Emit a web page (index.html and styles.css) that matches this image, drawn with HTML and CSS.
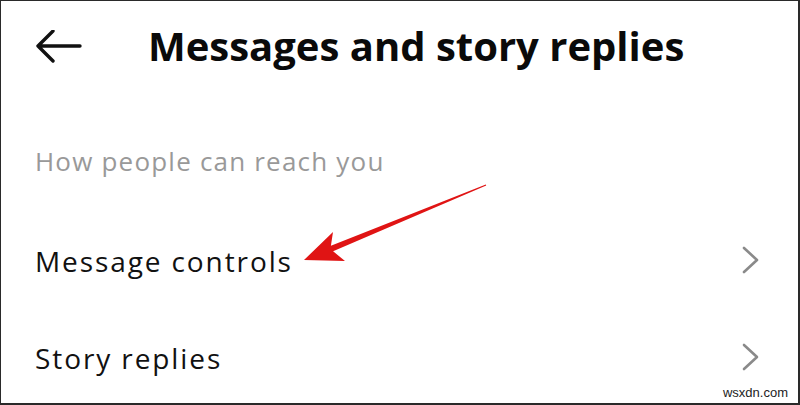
FILE: index.html
```html
<!DOCTYPE html>
<html lang="en">
<head>
  <meta charset="UTF-8" />
  <meta name="viewport" content="width=device-width, initial-scale=1.0" />
  <title>Messages and story replies</title>
  <link rel="stylesheet" href="styles.css">
</head>
<body>
  <div class="screen">
    <!-- Top bar with back button -->
    <header class="top-bar">
      <svg class="back-icon" width="46" height="34" viewBox="0 0 46 34" fill="none" stroke="#111" stroke-width="3.4" stroke-linecap="round" stroke-linejoin="round">
        <path d="M44 16H2M17 1L2 16l15 15" />
      </svg>
      <h1 class="title">Messages and story replies</h1>
    </header>

    <p class="section-label">How people can reach you</p>

    <div class="setting-row">
      <span>Message controls</span>
      <svg class="chevron" width="18" height="28" viewBox="0 0 18 28" fill="none" stroke="#8a8a8a" stroke-width="2.6" stroke-linecap="round" stroke-linejoin="round">
        <path d="M2 2l13 12L2 26" />
      </svg>
    </div>

    <div class="setting-row">
      <span>Story replies</span>
      <svg class="chevron" width="18" height="28" viewBox="0 0 18 28" fill="none" stroke="#8a8a8a" stroke-width="2.6" stroke-linecap="round" stroke-linejoin="round">
        <path d="M2 2l13 12L2 26" />
      </svg>
    </div>

    <!-- Red pointer arrow -->
    <svg class="pointer" width="800" height="405" viewBox="0 0 800 405">
      <polygon fill="#e01414" points="304,260 333,232 330.9,245.7 485.8,184.4 486.2,185.6 333.1,251.3 345,261" />
    </svg>

    <span class="watermark">wsxdn.com</span>
  </div>
</body>
</html>
```

FILE: styles.css
```css
body {
  margin: 0;
  background: #fff;
  font-family: "Open Sans", Roboto, sans-serif;
}

.screen {
  position: relative;
  width: 800px;
  height: 405px;
  box-sizing: border-box;
  border-top: 1px solid #2a2a2a;
  border-left: 1px solid #2a2a2a;
  border-right: 2px solid #2a2a2a;
  border-bottom: 2px solid #2a2a2a;
  overflow: hidden;
  background: #fff;
}

.top-bar {
  display: flex;
  align-items: center;
  height: 93px;
  padding-left: 35px;
}

.back-icon {
  margin-top: -2px;
}

.title {
  margin: -4px 0 0 66px;
  font-weight: 700;
  font-size: 40px;
  color: #0a0a0a;
}

.section-label {
  margin: 50px 0 0 34px;
  font-size: 26px;
  line-height: 34px;
  letter-spacing: 1.2px;
  color: #999;
}

.section-label + .setting-row {
  margin-top: 33px;
}

.setting-row {
  display: flex;
  align-items: center;
  justify-content: space-between;
  height: 97px;
  padding: 0 38px 0 34px;
  font-size: 28px;
  letter-spacing: 1.9px;
  color: #111;
}

.setting-row span {
  margin-top: 2px;
}

.pointer {
  position: absolute;
  top: -1px;
  left: -1px;
  pointer-events: none;
}

.watermark {
  position: absolute;
  right: 10px;
  bottom: 3px;
  font-family: "Liberation Sans", Arial, sans-serif;
  font-size: 13px;
  color: #222;
}
```
